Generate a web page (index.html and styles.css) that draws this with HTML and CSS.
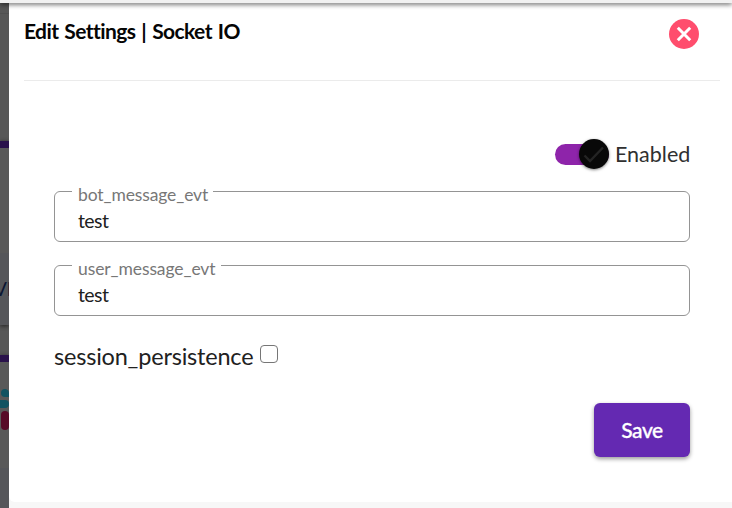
FILE: index.html
```html
<!DOCTYPE html>
<html lang="en">
<head>
<meta charset="utf-8">
<title>Edit Settings</title>
<link rel="stylesheet" href="styles.css">
</head>
<body>
<div class="topbar"></div>
<div class="layout">
  <aside class="backdrop">
    <div class="page-head"></div>
    <div class="page-gap"></div>
    <div class="card">
      <div class="card-body"></div>
      <div class="card-foot"><span>VI</span></div>
    </div>
    <div class="card-gap"></div>
    <div class="card second">
      <div class="card-body">
        <svg class="slack" width="9" height="44" viewBox="0 0 9 44">
          <path d="M9 9H5A4 4 0 0 1 5 1C7 1 9 2.5 9 5ZM0 12H5a4 4 0 0 1 0 8H0Z" fill="#125361"/>
          <rect x="1" y="23" width="8" height="19" rx="4" fill="#570b27"/>
        </svg>
      </div>
      <div class="card-foot"></div>
    </div>
  </aside>
  <main class="drawer">
    <section class="panel">
      <header class="header">
        <h1 class="title">Edit Settings | Socket IO</h1>
        <button class="close" aria-label="Close">
          <svg width="30" height="30" viewBox="0 0 30 30"><circle cx="15" cy="15" r="15" fill="#ff4d6d"/><path d="M8.8 8.8 21.2 21.2M21.2 8.8 8.8 21.2" stroke="#fff" stroke-width="3"/></svg>
        </button>
      </header>
      <form class="form">
        <div class="toggle-row">
          <span class="track"><span class="thumb"><svg width="24" height="24" viewBox="0 0 24 24"><path d="M2.5 13.5 8 19 21 5.500" fill="none" stroke="#242424" stroke-width="2.400"/></svg></span></span>
          <span class="enabled">Enabled</span>
        </div>
        <fieldset class="field"><legend><span class="bot">bot_message_evt</span></legend><span class="value">test</span></fieldset>
        <fieldset class="field"><legend><span class="user">user_message_evt</span></legend><span class="value">test</span></fieldset>
        <label class="check-row"><span class="check-label">session_persistence</span><input class="checkbox" type="checkbox"></label>
        <button class="save" type="button"><span>Save</span></button>
      </form>
    </section>
  </main>
</div>
</body>
</html>
```
FILE: styles.css
```css
* { box-sizing: border-box; }
body { margin: 0; width: 732px; height: 508px; overflow: hidden; background: #fff; color: #212121; font-family: Lato, sans-serif; }
.topbar { position: relative; z-index: 2; height: 3px; background: #f1f1f1; box-shadow: 0 1px 5px rgba(0,0,0,.85); }
.layout { display: flex; height: 505px; }
.backdrop { width: 9px; overflow: hidden; background: #575757; }
.page-head { height: 11px; border-bottom: 1px solid #505050; }
.page-gap { height: 127px; }
.card { border-top: 7px solid #2a124b; background: #595959; box-shadow: 0 1px 4px #222; }
.card-body { height: 105px; }
.card-foot { height: 72px; background: #55565a; overflow: hidden; }
.card-foot span { display: block; margin: 24px 0 0 -6px; width: 20px; font-size: 19px; line-height: 24px; color: #0b1533; }
.card-gap { height: 30px; }
.second .card-body { height: 106px; padding-top: 26px; }
.slack { display: block; }
.drawer { flex: 1; background: #f7f7f7; }
.panel { height: 499px; padding: 0 12px 0 15px; background: #fff; border-radius: 0 0 0 6px; }
.header { display: flex; justify-content: space-between; height: 78px; padding: 16px 21px 0 0; border-bottom: 1px solid #ebebeb; }
.title { margin: -1px 0 0; font-size: 21px; line-height: 26px; font-weight: 700; color: #050505; letter-spacing: -.6px; word-spacing: 1.5px; white-space: nowrap; }
.close { width: 30px; height: 30px; padding: 0; border: 0; background: none; }
.close svg { display: block; }
.form { display: flex; flex-direction: column; padding: 58px 30px 0; }
.toggle-row { display: flex; align-items: center; justify-content: flex-end; height: 30px; }
.track { display: flex; justify-content: flex-end; align-items: center; width: 54px; height: 21px; border-radius: 11px; background: #8e24aa; }
.thumb { display: flex; align-items: center; justify-content: center; width: 30px; height: 30px; flex: none; border-radius: 50%; background: #080808; box-shadow: 0 1px 3px rgba(0,0,0,.5); }
.enabled { width: 75px; margin-left: 6px; font-size: 21.500px; line-height: 28px; color: #303030; white-space: nowrap; }
.field { display: block; min-width: 0; height: 60px; margin: 13px 0 0; padding: 0 23px; border: 1px solid #949494; border-radius: 6px; }
.field + .field { margin-top: 14px; }
.field legend { height: 18px; margin-left: -6px; padding: 0 5px 0 6px; font-size: 17.500px; line-height: 18px; color: #777; }
.field legend span { display: block; height: 26px; padding-top: 4px; white-space: nowrap; }
.bot { width: 130px; letter-spacing: -.12px; }
.user { width: 138px; letter-spacing: -.1px; }
.value { display: block; margin-top: 8px; font-size: 19.500px; line-height: 26px; letter-spacing: -.6px; }
.check-row { display: flex; align-items: center; height: 34px; margin-top: 23px; }
.check-label { width: 200px; font-size: 23.500px; line-height: 32px; letter-spacing: -.2px; white-space: nowrap; }
.checkbox { appearance: none; width: 18px; height: 18px; margin: -4px 0 0 6px; border: 1.500px solid #767676; border-radius: 4px; background: #fff; }
.save { align-self: flex-end; width: 96px; height: 54px; margin-top: 30px; padding: 0; border: 0; border-radius: 6px; background: #6429b2; box-shadow: 0 2px 4px rgba(0,0,0,.4); color: #fff; font: 500 21px/54px Lato, sans-serif; letter-spacing: -.4px; -webkit-text-stroke: .3px #fff; }
```
